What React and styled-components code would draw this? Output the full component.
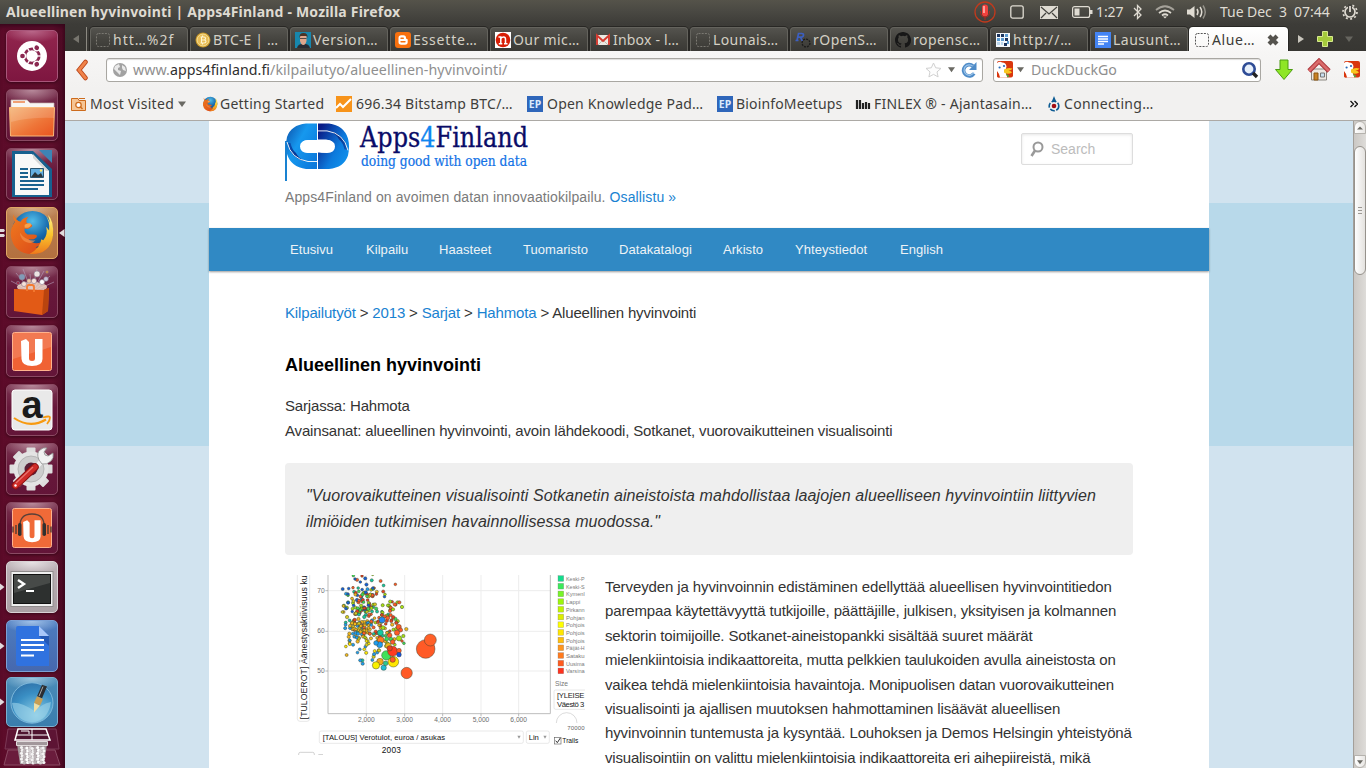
import React from "react";
import styled, { createGlobalStyle, css } from "styled-components";

const ui = `"Noto Sans", "Open Sans", sans-serif`;
const web = `"Liberation Sans", Arial, sans-serif`;

const Global = createGlobalStyle`
  * { box-sizing: border-box; }
  html, body { margin: 0; padding: 0; overflow: hidden; }
  svg { display: block; flex: none; }
`;

const Desktop = styled.div`
  width: 1366px; height: 768px; overflow: hidden;
  display: flex; flex-direction: column;
  font-family: ${ui}; background: #3c3b37;
`;
const TopPanel = styled.header`
  height: 24px; flex: none; display: flex; align-items: center;
  justify-content: space-between; padding: 0 8px 0 6px;
  background: linear-gradient(#55534a, #4a4943 45%, #3d3c38);
  color: #dfdbd2;
`;
const WindowTitle = styled.div`
  font-size: 14px; font-weight: 700; white-space: pre; line-height: 24px; letter-spacing: 0.2px;
`;
const Indicators = styled.div`display: flex; align-items: center; height: 24px;`;
const Slot = styled.div`
  width: ${(p) => p.$w}px; display: flex; align-items: center; flex: none;
  font-size: 14px; line-height: 24px; white-space: pre; letter-spacing: ${(p) => p.$ls || 0}px;
`;
const Body = styled.div`display: flex; flex: 1; min-height: 0;`;

const Launcher = styled.nav`
  width: 65px; flex: none; padding: 6px 0 0 0; overflow: hidden;
  display: flex; flex-direction: column; gap: 7px;
  background: linear-gradient(90deg, #5c0b29, #5f0f2c 80%, #4e0a24 95%, #3e071d);
  box-shadow: inset 0 5px 5px -3px #33061a;
`;
const LaunchRow = styled.div`
  height: ${(p) => p.$h || 52}px; display: flex; align-items: center; flex: none;
  margin-top: ${(p) => p.$pull || 0}px;
`;
const Pip = styled.div`width: 6px; flex: none; display: flex; align-items: center;`;
const Tile = styled.div`
  width: 52px; height: 100%; flex: none; border-radius: 5px; border: 1px solid ${(p) => p.$edge || "#8a4a63"};
  background: ${(p) => p.$bg || "radial-gradient(ellipse 30px 14px at 50% 0, #b78a9b, transparent), linear-gradient(#7b3652, #67173a 45%, #631538)"};
  box-shadow: 0 1px 3px rgba(30, 0, 12, .6);
  svg { margin: -1px; }
`;
const TrashWrap = styled.div`padding-left: 3px;`;

const Browser = styled.main`flex: 1; min-width: 0; display: flex; flex-direction: column; background: #f2f1f0;`;
const TabBar = styled.div`
  height: 27px; flex: none; display: flex; align-items: flex-end; background: linear-gradient(#3d3c38, #373632);
`;
const TabScroll = styled.div`width: 22px; height: 24px; display: flex; align-items: center; padding-left: 7px; border-right: 1px solid #8b8981; margin-right: 3px;`;
const Tab = styled.div`
  width: 98px; height: 24px; margin-right: 2px; flex: none; display: flex; align-items: center; padding-left: 4px;
  gap: 2px; font-size: 14px; white-space: nowrap; color: #d4d0c5;
  border: 1px solid #64635d; border-bottom: 0; border-radius: 4px 4px 0 0;
  background: linear-gradient(#54534e, #45443f 50%, #3a3935);
  box-shadow: 0 0 0 1px #282724;
  ${(p) => p.$active && css`
    margin-left: -1px; width: 99px; margin-right: 0; color: #3c3b37; border-color: #fff; background: linear-gradient(#fff, #f7f6f5);
  `}
  span { letter-spacing: ${(p) => p.$ls ?? 0.6}px; line-height: 20px; flex: 1; }
`;
const TabTools = styled.div`display: flex; align-items: center; height: 24px; gap: 12px; padding-left: 9px;`;

const NavBar = styled.div`
  height: 37px; flex: none; display: flex; align-items: center; padding-left: 10px; background: linear-gradient(#f7f6f5, #f2f1f0);
`;
const Field = styled.div`
  height: 24px; width: ${(p) => p.$w}px; margin-left: ${(p) => p.$ml}px; flex: none;
  border: 1px solid #a9a7a2; border-radius: 3px; background: #fff; box-shadow: inset 0 1px 1px #dedddb;
  display: flex; align-items: center; padding: 0 ${(p) => p.$pr}px 0 ${(p) => p.$pl}px; gap: ${(p) => p.$gap}px;
  font-size: 14.2px; color: #8f8f8f; white-space: nowrap;
  span { flex: 1; line-height: 22px; letter-spacing: ${(p) => p.$ls || 0}px; padding-left: ${(p) => p.$indent || 0}px; }
  b { font-weight: 400; color: #2e2e2e; }
`;
const NavIcons = styled.div`display: flex; align-items: center; gap: 13px; margin-left: 13px;`;

const Bookmarks = styled.div`
  height: 33px; flex: none; display: flex; align-items: center; padding: 0 0 1px 6px; border-bottom: 1px solid #aca9a5;
  font-size: 14px; color: #3f3e3b; white-space: nowrap;
`;
const Bookmark = styled.div`
  width: ${(p) => p.$w}px; flex: none; display: flex; align-items: center; gap: ${(p) => p.$gap}px;
  letter-spacing: ${(p) => p.$ls ?? 0.24}px;
  svg + span { line-height: 20px; }
`;

const Viewport = styled.div`flex: 1; min-height: 0; display: flex;`;
const Canvas = styled.div`
  flex: 1; min-width: 0; overflow: hidden; display: flex; justify-content: center;
  background: linear-gradient(#d1e3ef 0 82px, #b8d9ea 82px 325px, #d1e3ef 325px);
`;
const Page = styled.div`width: 1000px; background: #fff; font-family: ${web}; color: #333; font-size: 15px;`;
const SiteHeader = styled.div`height: 107px; padding: 2px 76px 0; display: flex; justify-content: space-between;`;
const Tagline = styled.p`margin: 6px 0 0; font-size: 14px; line-height: 20px; color: #7a7a7a; white-space: nowrap; letter-spacing: 0.11px;`;
const Link = styled.a`color: #1982d1;`;
const SearchBox = styled.div`
  width: 112px; height: 32px; margin-top: 10px; border: 1px solid #ddd; border-radius: 2px; box-shadow: inset 0 1px 3px rgba(0,0,0,.1);
  display: flex; align-items: center; gap: 7px; padding-left: 8px; font-size: 14px; color: #bcbcbc;
`;
const Menu = styled.div`
  height: 43px; background: #3089c4; box-shadow: 0 1px 2px rgba(0,0,0,.4); padding-left: 65px; display: flex; align-items: center;
  font-size: 13px; color: #eef3f6;
  position: relative;
`;
const MenuItem = styled.span`padding: 0 16px; width: ${(p) => p.$w}px; flex: none; white-space: nowrap; letter-spacing: 0.05px;`;
const Article = styled.article`padding: 30px 76px 0;`;
const Crumbs = styled.div`line-height: 24px; white-space: nowrap; letter-spacing: -0.155px;`;
const Heading = styled.h1`margin: 28px 0 0; font-size: 18px; line-height: 24px; color: #000; white-space: nowrap;`;
const Meta = styled.p`margin: 16px 0 0; line-height: 25px; white-space: nowrap; letter-spacing: -0.168px;`;
const Quote = styled.blockquote`
  margin: 20px 0 0; height: 92px; padding: 20px 21px; border-radius: 4px; background: #efefef;
  font-size: 16px; font-style: italic; line-height: 26px; white-space: nowrap; letter-spacing: 0.085px;
`;
const Columns = styled.div`display: flex; gap: 20px; margin-top: 20px;`;
const Copy = styled.p`margin: 0; line-height: 24.4px; white-space: nowrap;`;
const CopyLine = styled.span`display: block; letter-spacing: ${(p) => p.$ls}px;`;

const Scrollbar = styled.div`
  width: 13px; flex: none; background: linear-gradient(90deg, #cbc8c4, #dedcd9); border-left: 1px solid #a39f9a;
  display: flex; flex-direction: column;
`;
const ScrollButton = styled.div`
  height: 13px; border-radius: 7px 7px 0 0; background: linear-gradient(90deg, #fff, #e8e6e3); border: 1px solid #b5b2ad;
  display: flex; align-items: center; justify-content: center;
  ${(p) => p.$down && css`margin-top: auto; border-radius: 0 0 7px 7px;`}
`;
const Thumb = styled.div`
  height: 129px; margin-top: 12px; border: 1px solid #96928c; border-radius: 6px;
  background: linear-gradient(90deg, #fefefe, #e4e2df); display: flex; align-items: center; justify-content: center;
`;

/* ---------- small icons ---------- */
const Blank = ({ c = "#7b7972" }) => (
  <svg width="16" height="16"><rect x="1.5" y="1.5" width="13" height="13" rx="2" fill="none" stroke={c} strokeDasharray="2 1.2" /></svg>
);
const Bitcoin = () => (
  <svg width="16" height="16"><circle cx="8" cy="8" r="7.5" fill="#c79524" /><circle cx="8" cy="8" r="6" fill="#e9bd55" stroke="#f8e29a" />
    <path d="M6.500 5v6M5.500 5H9q1.500 0 1.500 1.500T9 8H6.500M9 8q2 0 2 1.500T9 11H5.500M7.500 3.500V5M7.500 11v1.500" stroke="#fff6d2" strokeWidth="1.100" fill="none" /></svg>
);
const Portrait = () => (
  <svg width="16" height="16"><path fill="#1787ad" d="M0 0h16v16H0z" /><path fill="#2a2b32" d="M2 16q1-4 5-4h3q4 0 5 4z" /><path fill="#dfa68c" d="M5 4h6.500v5q-1 4-3.200 4T5 9z" /><path fill="#4a3326" d="M4.500 6q-.5-5 4-5t4 5l-1-2H5.500z" /><path stroke="#333" strokeWidth=".8" d="M5 6.500h6.500" /></svg>
);
const Blogger = () => (
  <svg width="16" height="16"><rect width="16" height="16" rx="3" fill="#f8700e" /><path fill="#fff" d="M3.500 6q0-2.700 2.700-2.700H8.500Q11 3.300 11 6q0 1 1 1 .700 0 .700.800V10q0 2.700-2.700 2.700H6.200Q3.500 12.700 3.500 10z" /><path d="M6 6.200h2.300M6 9.800h4" stroke="#f8700e" strokeWidth="1.400" strokeLinecap="round" /></svg>
);
const RedN = () => (
  <svg width="16" height="16"><path fill="#fff" d="M0 0h16v16H0z" /><circle cx="8" cy="8" r="7.300" fill="#d81e05" /><path d="M3.500 5h2.300v6.500M3.800 11.700h3.500M5.800 6.500q1.200-1.500 2.800-1.500 1.900 0 1.900 2.200v4.500M9 11.700h3.500" fill="none" stroke="#fff" strokeWidth="1.500" /></svg>
);
const Gmail = () => (
  <svg width="16" height="16"><path fill="#ece9e2" d="M1 3h14v10H1z" /><path d="m3 13 5-5 5 5" stroke="#bdb9ae" fill="none" /><path d="M2 13V3.500L8 9l6-5.500V13" fill="none" stroke="#d5392e" strokeWidth="1.900" /></svg>
);
const RLogo = () => (
  <svg width="16" height="16"><path d="m2 8.500 1.500-7h3.200q2 0 1.800 1.600-.3 2-2.300 2H3.500M5.500 5.200 7.300 9M.5 8.500h3" stroke="#3c5fc0" strokeWidth="1.700" fill="none" /><circle cx="11" cy="11" r="3.900" fill="none" stroke="#1c1c1c" strokeWidth="1.300" strokeDasharray="2 1" /></svg>
);
const Octo = () => (
  <svg width="16" height="16" viewBox="0 0 16 16"><path fill="#171717" d="M8 0C3.580 0 0 3.580 0 8c0 3.540 2.290 6.530 5.470 7.590.4.070.55-.17.55-.38v-1.490c-2.010.37-2.530-.49-2.690-.94-.09-.23-.48-.94-.82-1.130-.28-.15-.68-.52-.01-.53.63-.01 1.080.58 1.230.82.72 1.210 1.870.87 2.330.66.07-.52.28-.87.51-1.070-1.780-.2-3.640-.89-3.640-3.950 0-.87.31-1.590.82-2.150-.08-.2-.36-1.020.08-2.120 0 0 .67-.21 2.200.82a7.600 7.600 0 0 1 4 0c1.530-1.040 2.200-.82 2.200-.82.44 1.100.16 1.920.08 2.120.51.56.82 1.270.82 2.150 0 3.070-1.870 3.750-3.650 3.950.29.25.54.73.54 1.480v2.200c0 .21.15.46.55.38A8 8 0 0 0 16 8c0-4.420-3.580-8-8-8z" /></svg>
);
const Checks = () => (
  <svg width="16" height="16"><path fill="#f4f8fb" d="M1 1h14v14H1z" /><path fill="#1c355e" d="M2 2h3v3H2zM6 2h3v3H6zM10 6h3v3h-3zM9 11h3v3H9z" /><path fill="#5b9bd0" d="M10 2h3v3h-3zM2 6h3v3H2zM6 6h3v3H6zM12 9h2v3h-2z" /><path fill="#bcd7ec" d="M2 10h3v3H2zM6 10h2v3H6z" /></svg>
);
const Docs = () => (
  <svg width="16" height="16"><path fill="#4384f4" d="M0 0h16v16H0z" /><path d="M3 4.500h10M3 7h10M3 9.500h10M3 12h6" stroke="#fff" strokeWidth="1.300" /></svg>
);
const Tri = ({ dir = "down", c = "#6a6963", s = 8 }) => (
  <svg width={s} height={s} viewBox="0 0 8 8"><path fill={c} d={{ down: "M0 1.500h8L4 7z", left: "M7 0v8L1 4z", right: "M1 0v8l6-4z", up: "M0 6h8L4 2z" }[dir]} /></svg>
);
const EP = () => (
  <svg width="16" height="16"><path fill="#2f66ba" d="M0 0h16v16H0z" /><text x="8" y="12" textAnchor="middle" fontFamily="Noto Sans" fontWeight="700" fontSize="10.500" letterSpacing="0" fill="#dce9fb">EP</text></svg>
);
const Duck = () => (
  <svg width="16" height="17" viewBox="0 0 16 17"><rect width="16" height="16.500" rx="2" fill="#d9360d" /><path fill="#fff" d="M0 2Q3 0 5 1.500q4 0 4.500 4L8.500 9q0 4 2 7.500H3Q2 12 0 10z" /><path fill="#d9360d" d="M0 11q2 2 2.500 5.500H1Q0 16 0 15z" /><path fill="#f8c61e" d="M7 8.500q4-2.500 8.500-1-1 2-4 2.300 3 .3 3.500 1.700-4 2.500-8 0z" /><circle cx="2.600" cy="6.500" r="1.100" fill="#2769b8" /><circle cx="7" cy="5" r="1.100" fill="#2769b8" /><path fill="#4cad3e" d="m9 12.500 3.500 2.500-2 1.500z" /></svg>
);

const Fox = ({ s }) => (
  <svg width={s} height={s} viewBox="0 0 48 48">
    <defs>
      <radialGradient id="sea" cx=".5" cy=".25" r=".8"><stop offset="0" stopColor="#51bce9" /><stop offset=".5" stopColor="#1769ac" /><stop offset="1" stopColor="#07305f" /></radialGradient>
      <linearGradient id="fur" x1="0" y1="0" x2="1" y2="1"><stop offset="0" stopColor="#ef7c20" /><stop offset=".5" stopColor="#e5601b" /><stop offset="1" stopColor="#d5411b" /></linearGradient>
      <linearGradient id="tail" x1="0" y1="0" x2="0" y2="1"><stop offset="0" stopColor="#fff38d" /><stop offset=".5" stopColor="#fac42d" /><stop offset="1" stopColor="#ed7a1c" /></linearGradient>
    </defs>
    <circle cx="25" cy="23" r="21" fill="url(#sea)" />
    <path fill="url(#fur)" d="M5 5q0 5 2 8Q2 20 3 28q3 17 21 18 15 0 20-12-8 8-16 5 5-1 6-5-8 3-13-3 5 1 8-2 2-3-3-3l-6 0q-4-2-3-6 4 1 6-1 3-2 1-3l-5-2q-1-3 2-6-6 1-8 5-5-1-8-8z" />
    <path fill="url(#tail)" d="M38 6q5 6 4 16l-3-4q2 8-3 14l-2-1q-1 9-12 15 21 1 24-19Q47 12 41 6l2 8q-2-5-5-8z" />
    <path fill="#f8a24b" d="M17 16q6-3 7 0-2 4-7 3z" /><path fill="#f4924a" d="M12 24q6 9 16 8-3 4-9 2t-7-10z" opacity=".7" />
  </svg>
);

/* ---------- launcher artwork, 52 × 52 ---------- */
const Art = ({ children, h = 52 }) => <svg width="52" height={h} viewBox="0 0 52 52" preserveAspectRatio="none">{children}</svg>;
const DashIcon = () => (
  <Art><circle cx="26" cy="26" r="15" fill="#fff" /><circle cx="26" cy="26" r="7.200" fill="none" stroke="#8a2750" strokeWidth="2.800" />
    {[180, 60, -60].map((a) => <g key={a} transform={`rotate(${a} 26 26)`}><circle cx="35.500" cy="26" r="3" fill="#8a2750" stroke="#fff" strokeWidth="1.300" /></g>)}
    {[0, 120, 240].map((a) => <path key={a} transform={`rotate(${a} 26 26)`} d="M31 26h5" stroke="#fff" strokeWidth="1.300" />)}</Art>
);
const FolderIcon = () => (
  <Art><defs><linearGradient id="fo" x1="0" y1="0" x2="1" y2="1"><stop offset="0" stopColor="#f4b272" /><stop offset=".6" stopColor="#ee7437" /><stop offset="1" stopColor="#e9541f" /></linearGradient></defs>
    <path fill="#f8f6f4" stroke="#c9b6b0" strokeWidth=".7" d="M5 19v-8h16l3 3h24v5z" /><path d="M7 13h12" stroke="#f0a074" strokeWidth="2" /><path fill="url(#fo)" stroke="#f9ba7b" d="M3.500 18.500h45L47.500 47h-43z" /><path d="M5 33q20-5 43-4V19H4z" fill="#fff" opacity=".15" /></Art>
);
const WriterIcon = () => (
  <Art><path fill="#17608f" d="M6 3h21l19 18v28H6z" /><path fill="#3d84b4" d="M33 2h13v13z" /><path fill="#f8f8f8" d="M9 6h17l17 17v24H9z" /><path fill="#d6d6d6" d="M27 6v4l13 13h3z" /><path d="M14 21h8M14 25h8M14 29h8M14 33h24M14 37h24M14 41h18" stroke="#1a628f" strokeWidth="1.900" /><path fill="#63aee0" stroke="#28536f" d="M24.500 20.500h13v9h-13z" /><path fill="#28353b" d="m25 29 4-5 3 3 3-2 2 4z" /><circle cx="35" cy="22.500" r="1.200" fill="#ffe569" /></Art>
);
const BagIcon = () => (
  <Art><g stroke="#b79fbc" strokeWidth=".6">{[[5, 15], [10, 7], [17, 3], [24, 8], [31, 3], [38, 5], [44, 10], [48, 16]].map(([x, y]) => <path key={x} d={`M26 26 ${x} ${y}`} />)}</g>
    <ellipse cx="26" cy="21" rx="15" ry="5" fill="#f7e2cf" opacity=".8" />
    {[[16, 11, 3, "#819bb7"], [31, 8, 3, "#ece4e2"], [40, 13, 2.300, "#c9c2d8"], [23, 15, 2.200, "#f1c8a4"], [36, 16, 2.500, "#fff"], [28, 15, 2.600, "#f8e3d9"], [18, 18, 2.500, "#f6e1d7"], [41, 6, 1.300, "#e0902e"], [12, 17, 1.700, "#9a2d4e"]].map(([x, y, r, c]) => <circle key={x} cx={x} cy={y} r={r} fill={c} stroke="#8b7c90" strokeWidth=".6" />)}
    <path fill="#e25a16" d="m8 23 30 1 5-2-1 23-6 4-28-4z" /><path fill="#b9440f" d="m38 24 5-2-1 23-6 4z" /><path fill="none" stroke="#f47b31" strokeWidth="1.800" d="M21 25v-4q0-2 2-2h3q2 0 2 2v5" /></Art>
);
const U = () => <path fill="#fff" d="M15 16 20 14l3 3v16.500q0 2.500 3 2.500t3-2.500V14h7.500v20q0 7-10.500 7-10 0-10.500-7z" />;
const OneIcon = () => <Art><rect x="6.500" y="7.500" width="39" height="38" rx="2" fill="#f06234" stroke="#ffb28d" /><path fill="#fff" opacity=".15" d="M7 8h38v14L7 34z" /><U /></Art>;
const AmazonIcon = () => (
  <Art><rect x="6" y="6" width="40" height="40" rx="3" fill="#e9e9e9" stroke="#fff" /><text x="26" y="33.500" fontFamily="Liberation Sans, Arial" fontWeight="700" fontSize="38" textAnchor="middle" fill="#1b1b1b">a</text><path d="M8 34q16 11 32 1.500" stroke="#f79a12" strokeWidth="2.100" fill="none" /><path d="M37 33.500q7-2 7 0 0 3-3 6.500" stroke="#f79a12" strokeWidth="1.800" fill="none" /></Art>
);
const GearIcon = () => (
  <Art>{[0, 45, 90, 135].map((a) => <rect key={a} transform={`rotate(${a} 25 26)`} x="20.500" y="4.500" width="9" height="43" rx="1" fill="#dedede" />)}<circle cx="25" cy="26" r="17.500" fill="#e4e4e4" /><circle cx="25" cy="26" r="13" fill="#cdcdcd" stroke="#b6b6b6" /><circle cx="25" cy="26" r="6.500" fill="#571e35" />
    <path d="M29 25 37 17" stroke="#f1f1f1" strokeWidth="5" /><path d="M33 17q-3-7 1-10 3-3 7-2l-3 4 1 3 3 1 5-3q1 5-2 8-4 4-9 3z" fill="#f1f1f1" stroke="#8d8d8d" strokeWidth=".8" /><path d="M9.500 42.500 29 24" stroke="#8c1111" strokeWidth="7.500" strokeLinecap="round" /><path d="M9.500 42.500 29 24" stroke="#cf2c28" strokeWidth="5.500" strokeLinecap="round" /><path d="M10 40 27 24" stroke="#e97570" strokeWidth="1.200" /><circle cx="9.500" cy="42.500" r="1.200" fill="#fff" /></Art>
);
const MusicIcon = () => <Art><rect x="6.500" y="6.500" width="39" height="39" rx="2" fill="#f06a38" stroke="#ffb28d" /><path d="M14 26q-1-14 12-14t12 14" fill="none" stroke="#5a4038" strokeWidth="1.300" /><g fill="#303030"><rect x="12" y="21" width="3.500" height="13" rx="1.700" /><rect x="36.500" y="21" width="3.500" height="13" rx="1.700" /></g><path d="M10 23v9M7 24.500v6M42 23v9M45 24.500v6" stroke="#413632" strokeWidth="1.300" /><g transform="translate(5 7) scale(.81)"><U /></g></Art>;
const TermIcon = () => <Art><rect x="5" y="10.500" width="42" height="35" fill="#efefef" stroke="#8f8b8c" /><rect x="7.500" y="13.500" width="37" height="29" fill="#2d302f" stroke="#111" /><path fill="#595c5a" opacity=".6" d="M8 14h36v8L8 32z" /><path d="m12 19 6 4-6 4" stroke="#fff" strokeWidth="2.400" fill="none" /><path d="M20 30h8" stroke="#fff" strokeWidth="2" /></Art>;
const DocIcon = () => <Art><path fill="#3072df" d="M12 6h21l10 10v30H12q-2 0-2-2V8q0-2 2-2z" /><path fill="#a9c7f9" d="m33 6 10 10H33z" /><path fill="#2458b5" d="M33 16h10v10z" /><path d="M15 20h23M15 25h23M15 30h23M15 35.500h13" stroke="#fff" strokeWidth="2.200" /></Art>;
const QuillIcon = () => (
  <Art h={50}><defs><radialGradient id="qb" cx=".6" cy=".8" r=".9"><stop offset="0" stopColor="#8fd0e6" /><stop offset=".6" stopColor="#3a8fc4" /><stop offset="1" stopColor="#2c6da5" /></radialGradient></defs>
    <circle cx="26" cy="27" r="21" fill="url(#qb)" stroke="#7db8da" /><path fill="#9ed3ea" opacity=".6" d="M6 27q10-1 23 9 6-8 16-10-3 20-19 21Q9 46 6 27z" /><path fill="#2b2e31" d="m36 8 5 2-5 12-5-2z" /><path fill="#c99f53" d="m31 20 6 3-3 7-6-3z" /><path fill="#f0dfa6" d="m28 27 6 3-6 7z" /><path stroke="#fff" opacity=".6" d="m37 10-4 10" /></Art>
);
const paper = Array.from({ length: 54 }, (_, i) => [18.5 + (i % 9) * 2.7 + (i % 2) * 0.8, 19.5 + Math.floor(i / 9) * 2.9 + ((i * 5) % 3) * 0.5, ["#f4f3f3", "#d8d3d5", "#fff", "#bdb5b8"][(i * 7 + Math.floor(i / 9)) % 4]]);
const TrashIcon = () => (
  <svg width="58" height="40" viewBox="0 0 58 40"><path fill="#5d1434" stroke="#7b3855" d="M5 1h48l3 20H2z" /><path d="M15 1h28l4 11H12z" fill="#4f1430" stroke="#fff" strokeWidth="1.500" /><path d="M29 1v11M13 7h33M18 3h8v3" stroke="#fff" fill="none" />
    <path fill="#6a1c3c" stroke="#8a4a63" d="m5 22-4 15h56l-5-15z" /><path d="m14 16 3 20h24l3-20z" fill="#a2969a" />{paper.map(([x, y, c], i) => <circle key={i} cx={x} cy={y} r="1.600" fill={c} />)}<path d="M13.500 13.500h31v4h-31z" fill="#a2979b" stroke="#e1dcdd" /></svg>
);

/* ---------- scatter chart ---------- */
const palette = ["#ff5a26", "#f2b61c", "#ffe600", "#a8e112", "#3edc55", "#18c8a0", "#1e9df0", "#155ed8", "#e8401f", "#d5cb1e"];
const rand = ((s) => () => (s = (s * 16807) % 2147483647) / 2147483647)(4711);
const cloud = (n, x, y, sx, sy, colors) =>
  Array.from({ length: n }, () => {
    const g = () => rand() + rand() + rand() - 1.5;
    return [x + g() * sx, y + g() * sy, 4 + rand() * 1.2, palette[colors[Math.floor(rand() * colors.length)]]];
  });
const dots = [
  ...cloud(24, 250, 88, 46, 38, [7, 6, 0, 3, 8, 5, 7]),
  ...cloud(100, 256, 142, 62, 52, [0, 3, 7, 4, 5, 8, 1, 9]),
  ...cloud(80, 240, 205, 46, 34, [1, 1, 1, 9, 6, 0]),
  ...cloud(42, 308, 210, 56, 46, [0, 3, 5, 4, 8, 1]),
  ...cloud(26, 262, 262, 60, 34, [1, 6, 2, 9]),
  ...cloud(18, 328, 150, 26, 46, [0, 8, 3]),
  [220, 47, 4, palette[4]], [246, 48, 4, palette[8]], [278, 43, 4, palette[3]], [225, 57, 4, palette[7]],
  [241, 66, 4, palette[7]], [346, 73, 4, palette[0]], [219, 83, 4, palette[0]], [187, 156, 4, palette[9]],
  [204, 102, 4, palette[7]], [315, 103, 4, palette[3]], [358, 127, 5, palette[0]], [366, 141, 5, palette[3]],
  [248, 311, 5, palette[6]], [247, 301, 5, palette[5]], [241, 301, 5, palette[6]],
  [356, 201, 8, palette[0]], [351, 218, 8, palette[0]], [362, 210, 6, palette[0]], [357, 235, 8, palette[3]], [370, 228, 5, palette[3]], [366, 243, 4, palette[0]],
  [306, 180, 9, "#2388f4"], [323, 174, 6, palette[0]], [301, 218, 9, palette[5]], [302, 240, 10, "#ff7a20"], [299, 254, 9, palette[6]], [288, 249, 7, palette[6]],
  [329, 226, 7, palette[0]], [320, 237, 6, palette[4]], [333, 238, 6, palette[4]], [338, 246, 7, palette[0]], [325, 257, 9, "#f2b61c"], [309, 203, 6, palette[3]],
  [300, 305, 10, "#f5a81c"], [288, 316, 11, "#faf000"], [340, 305, 16, "#ffe600"], [319, 286, 14, "#3ee05a"], [338, 274, 15, "#ff3a20"],
  [338, 299, 8, "#ff5a26"], [311, 323, 8, "#22bcd6"], [317, 310, 7, "#2dc890"], [357, 272, 7, palette[0]], [357, 284, 7, "#1450e0"], [329, 265, 8, "#e8401f"],
  [437, 267, 28, "#ff5a26"], [451, 240, 18, "#ff6028"], [380, 339, 17, "#ff5a26"],
];
const regions = [
  ["Keski-P", "#14dc8c"], ["Keski-S", "#3bea5a"], ["Kymenl", "#78f528"], ["Lappi", "#9cf70a"], ["Pirkann", "#c0f500"],
  ["Pohjan", "#dcee00"], ["Pohjois", "#ffff00"], ["Pohjois", "#ffe600"], ["Pohjois", "#ffbe0a"], ["Päijät-H", "#ff961e"],
  ["Sataku", "#ff7a1e"], ["Uusima", "#ff5a1e"], ["Varsina", "#ff321e"],
];
const Chart = () => (
  <svg width="300" height="180" viewBox="15 45 900 540" fontFamily="Liberation Sans, Arial, sans-serif">
    <rect x="52" y="20" width="37" height="464" rx="8" fill="#fff" stroke="#dcdcdc" strokeWidth="2" />
    <text transform="translate(80 478) rotate(-90)" fontSize="26" fill="#222" textLength="432">[TULOEROT] Äänestysaktiivisuus ku</text>
    <path d="M144 92h667M144 214h667M144 333h667M259 45v416M374 45v416M488 45v416M603 45v416M716 45v416" stroke="#ededed" strokeWidth="3" />
    <path d="M144 45v416h667V45" fill="none" stroke="#bdbdbd" strokeWidth="3" />
    <path d="M136 92h8M136 214h8M136 333h8M259 461v8M374 461v8M488 461v8M603 461v8M716 461v8" stroke="#999" strokeWidth="2" />
    <g fontSize="20" fill="#6e6e6e">
      {[["70", 98], ["60", 220], ["50", 340]].map(([t, y]) => <text key={t} x="134" y={y} textAnchor="end">{t}</text>)}
      {[259, 374, 488, 603, 716].map((x, i) => <text key={x} x={x} y="486" textAnchor="middle">{`${i + 2},000`}</text>)}
    </g>
    {dots.map(([x, y, r, c], i) => <circle key={i} cx={x} cy={y} r={r} fill={c} stroke="#37402f" strokeOpacity=".75" strokeWidth="1.800" />)}
    {regions.map(([t, c], i) => (
      <g key={i}><rect x="834" y={47 + i * 23.1} width="17" height="17" fill={c} stroke="#777" strokeOpacity=".6" strokeWidth="1.500" /><text x="858" y={63 + i * 23.1} fontSize="18" textLength={t === "Lappi" ? 43 : 56} lengthAdjust="spacingAndGlyphs" fill="#7c7c7c">{t}</text></g>
    ))}
    <text x="825" y="378" fontSize="20" fill="#777">Size</text>
    <rect x="822" y="390" width="120" height="58" rx="5" fill="#fff" stroke="#dcdcdc" strokeWidth="2" />
    <g fontSize="23" fill="#222"><text x="831" y="414" textLength="82">[YLEISE</text><text x="831" y="440" textLength="82">Väestö 3</text></g>
    <path d="M829 489a31 31 0 0 1 62 0" fill="none" stroke="#c9c9c9" strokeWidth="2" /><text x="862" y="509" fontSize="18" fill="#666" textLength="52">70000</text>
    <rect x="118" y="513" width="612" height="37" rx="5" fill="#fff" stroke="#dedede" strokeWidth="2" /><rect x="739" y="513" width="69" height="37" rx="5" fill="#fff" stroke="#dedede" strokeWidth="2" />
    <g fontSize="23" fill="#111"><text x="128" y="539" textLength="367">[TALOUS] Verotulot, euroa / asukas</text><text x="746" y="540">Lin</text><text x="305" y="580" fontSize="25" textLength="58">2003</text><text x="847" y="549" fontSize="20" textLength="48">Trails</text></g>
    <path fill="#999" d="M712 527h10l-5 9zM790 527h10l-5 9z" /><rect x="823" y="532" width="20" height="20" fill="#fff" stroke="#666" strokeWidth="2" /><path d="m827 542 5 6 9-14" fill="none" stroke="#333" strokeWidth="3" />
    <rect x="56" y="577" width="47" height="30" rx="5" fill="none" stroke="#bbb" strokeWidth="2" /><path d="M115 584h14" stroke="#ccc" strokeWidth="3" />
  </svg>
);

/* One half of the mark; the other half is the same shape turned by 180 degrees. */
const LogoHalf = ({ body, shade }) => (
  <>
    <path d="M32 .5H21Q6 2 2 14q-2 9 0 17 4 13 19 15h11V30H24q-8-1-8-7T24 17h8z" fill={`url(#${body})`} />
    <path d="M2.500 20q2 14 18 18.500Q13 35 11 30 7 27 5.500 20z" fill={`url(#${shade})`} />
    <path d="M2 19q4 17 21 19.500H32" fill="none" stroke="#fff" strokeWidth=".9" />
  </>
);
const Logo = () => (
  <svg width="250" height="58" viewBox="0 0 250 58">
    <defs>
      <linearGradient id="la" x1="0" y1="0" x2="1" y2=".8"><stop offset="0" stopColor="#0d4fa8" /><stop offset=".45" stopColor="#1698ee" /><stop offset="1" stopColor="#0b79dc" /></linearGradient>
      <linearGradient id="lb" x1="0" y1="0" x2="1" y2=".8"><stop offset="0" stopColor="#129af2" /><stop offset=".45" stopColor="#0c7adc" /><stop offset="1" stopColor="#0a1c86" /></linearGradient>
      <linearGradient id="lc" x1="0" y1="0" x2="1" y2="1"><stop offset="0" stopColor="#0b57b8" /><stop offset="1" stopColor="#08186f" /></linearGradient>
    </defs>
    <path d="M1 18v40" stroke="#1982d1" strokeWidth="2" />
    <LogoHalf body="la" shade="lc" />
    <g transform="rotate(180 32.500 23.200)"><LogoHalf body="lb" shade="lc" /></g>
    <path d="M15 23.500q0-6 8-6.500 6 0 9.500 2 3.500-2 9.500-2 8 .5 8 6.500t-8 6.500q-6 0-9.500-1.500-3.500 1.500-9.500 1.500-8-.5-8-6.500z" fill="#fff" />
    <path d="M32.500 0v18M32.500 29v18" stroke="#fff" strokeWidth=".9" />
    <g fontFamily="DejaVu Serif Condensed, DejaVu Serif, serif"><text x="75" y="24" fontSize="27" fill="#0a0c68" stroke="#0a0c68" strokeWidth=".3" textLength="168" lengthAdjust="spacingAndGlyphs">Apps<tspan fill="#0f86f0" stroke="#0f86f0">4</tspan>Finland</text>
      <text x="76" y="42.500" fontSize="14.500" fill="#1272e6" stroke="#1272e6" strokeWidth=".2" textLength="166" lengthAdjust="spacingAndGlyphs">doing good with open data</text></g>
  </svg>
);

const tabs = [
  ["htt…%2f", <Blank />, 1], ["BTC-E | …", <Bitcoin />, 0.15], ["Version…", <Portrait />], ["Essette…", <Blogger />, 0.8], ["Our mic…", <RedN />, 0.4], ["Inbox - l…", <Gmail />, 0.2],
  ["Lounais…", <Blank />, 0.4], ["rOpenS…", <RLogo />, 0.5], ["ropensc…", <Octo />, 0.5], ["http://…", <Checks />, 0.8], ["Lausunt…", <Docs />, 0.5],
];
const tileGloss = (a, b, c) => `radial-gradient(ellipse 30px 12px at 50% 0, ${a}, transparent), linear-gradient(${b}, ${c})`;
const apps = [
  { icon: <DashIcon />, bg: tileGloss("#b9688a", "#92264e", "#7e1640"), edge: "#a8567a" },
  { icon: <FolderIcon /> }, { icon: <WriterIcon /> },
  { icon: <Art><g transform="translate(2 2)"><Fox s={47} /></g></Art>, bg: tileGloss("#d9b089", "#bb8154", "#b3703f"), edge: "#e0a765", pips: 2, focus: true },
  { icon: <BagIcon /> }, { icon: <OneIcon /> }, { icon: <AmazonIcon /> }, { icon: <GearIcon /> }, { icon: <MusicIcon /> },
  { icon: <TermIcon />, bg: tileGloss("#e8e3e5", "#bbb0b5", "#aaa0a4"), edge: "#d9d2d5", pips: 1 },
  { icon: <DocIcon />, bg: tileGloss("#a3c3ea", "#4d7dc0", "#4668ae"), edge: "#7ca0d5", pips: 1 },
  { icon: <QuillIcon />, bg: tileGloss("#9ec7df", "#4a8cb8", "#3a7dad"), edge: "#7bb0d0", pips: 1, h: 50, pull: -2 },
];
const menu = [["Etusivu", 76], ["Kilpailu", 73], ["Haasteet", 84], ["Tuomaristo", 96], ["Datakatalogi", 104], ["Arkisto", 72], ["Yhteystiedot", 105], ["English", 76]];
const copy = [
  ["Terveyden ja hyvinvoinnin edistäminen edellyttää alueellisen hyvinvointitiedon", -0.11],
  ["parempaa käytettävyyttä tutkijoille, päättäjille, julkisen, yksityisen ja kolmannen", -0.13],
  ["sektorin toimijoille. Sotkanet-aineistopankki sisältää suuret määrät", -0.15],
  ["mielenkiintoisia indikaattoreita, mutta pelkkien taulukoiden avulla aineistosta on", -0.18],
  ["vaikea tehdä mielenkiintoisia havaintoja. Monipuolisen datan vuorovaikutteinen", -0.19],
  ["visualisointi ja ajallisen muutoksen hahmottaminen lisäävät alueellisen", -0.155],
  ["hyvinvoinnin tuntemusta ja kysyntää. Louhoksen ja Demos Helsingin yhteistyönä", -0.11],
  ["visualisointiin on valittu mielenkiintoisia indikaattoreita eri aihepiireistä, mikä", -0.19],
];

const Panel = () => (
  <TopPanel>
    <WindowTitle>Alueellinen hyvinvointi | Apps4Finland - Mozilla Firefox</WindowTitle>
    <Indicators>
      <Slot $w={36}><svg width="22" height="22"><circle cx="11" cy="11" r="10" fill="none" stroke="#c03a1d" strokeWidth="1.300" /><rect x="8" y="3.500" width="6" height="12" rx="3" fill="#f2413d" /><path d="M10 5v7" stroke="#ffc1b9" strokeWidth="1.500" /><path d="M6.500 10q0 6 4.500 6t4.500-6M11 16v3" stroke="#b3271d" fill="none" /></svg></Slot>
      <Slot $w={30}><svg width="14" height="14"><rect x=".8" y=".8" width="12.400" height="12.400" rx="2" fill="none" stroke="#dfdbd2" strokeWidth="1.300" /></svg></Slot>
      <Slot $w={32}><svg width="18" height="13"><path fill="#dfdbd2" d="M0 0h18v13H0z" /><path d="m1 1 8 7 8-7M1 12l5-5M17 12l-5-5" stroke="#45443f" fill="none" strokeWidth="1.200" /></svg></Slot>
      <Slot $w={24}><svg width="21" height="12"><rect x=".6" y=".6" width="17" height="10.800" rx="2" fill="none" stroke="#dfdbd2" strokeWidth="1.200" /><path fill="#dfdbd2" d="M2.500 2.500h5v7h-5zM18 4h2.500v4H18z" /></svg></Slot>
      <Slot $w={37} $ls={-0.1}>1:27</Slot>
      <Slot $w={22}><svg width="10" height="16"><path d="m1 4 7 7-3.500 3.500v-13L8 5l-7 7" fill="none" stroke="#dfdbd2" strokeWidth="1.300" /></svg></Slot>
      <Slot $w={32}><svg width="20" height="14" fill="none" stroke="#dfdbd2" strokeWidth="1.700"><path d="M1 5q9-7.500 18 0" opacity=".6" /><path d="M4 8q6-5 12 0M7 10.500q3-2.500 6 0" /><path d="m10 13.500-2-2h4z" fill="#dfdbd2" stroke="none" /></svg></Slot>
      <Slot $w={33}><svg width="20" height="16" fill="none" stroke="#dfdbd2" strokeWidth="1.500"><path d="M0 5.500h3L7.500 2v12L3 10.500H0z" fill="#dfdbd2" stroke="none" /><path d="M10 5q2 3 0 6M13 3q3.500 5 0 10" /><path d="M16 1.500q4.500 6.500 0 13" opacity=".5" /></svg></Slot>
      <Slot $w={122} $ls={-0.05}>{"Tue Dec  3  07:44"}</Slot>
      <Slot $w={16}><svg width="16" height="16" fill="none" stroke="#dfdbd2"><circle cx="8" cy="8" r="5" strokeWidth="1.700" /><circle cx="8" cy="8" r="7" strokeWidth="1.700" strokeDasharray="2 2.400" /><path d="M8 0v8" stroke="#45443f" strokeWidth="4" /><path d="M8 2v6" strokeWidth="1.800" /></svg></Slot>
    </Indicators>
  </TopPanel>
);

const Dock = () => (
  <Launcher>
    {apps.map((a, i) => (
      <LaunchRow key={i} $h={a.h} $pull={a.pull}>
        <Pip>{a.pips && <svg width="5" height="10"><path fill="#e2dadd" d={a.pips === 2 ? "M0 1h4l1 1.500L4 4H0zM0 6h4l1 1.500L4 9H0z" : "M0 1.500 4.500 5 0 8.500z"} /></svg>}</Pip>
        <Tile $bg={a.bg} $edge={a.edge}>{a.icon}</Tile>
        {a.focus && <Pip><svg width="7" height="8"><path fill="#e2dadd" d="M6.500 0v8L1 4z" /></svg></Pip>}
      </LaunchRow>
    ))}
    <LaunchRow $h={40} $pull={-6}><TrashWrap><TrashIcon /></TrashWrap></LaunchRow>
  </Launcher>
);

const Chrome = () => (
  <>
    <TabBar>
      <TabScroll><Tri dir="left" c="#77756e" /></TabScroll>
      {tabs.map(([t, icon, ls]) => <Tab key={t} $ls={ls}>{icon}<span>{t}</span></Tab>)}
      <Tab $active><Blank c="#555" /><span>Alue…</span><svg width="21" height="14"><path d="m3 3 8 8M11 3l-8 8" stroke="#55534e" strokeWidth="4.200" /></svg></Tab>
      <TabTools><Tri dir="right" c="#c9c6bd" s={8} /><svg width="16" height="16"><path d="M5.500.5h5v5h5v5h-5v5h-5v-5h-5v-5h5z" fill="#a5cb3c" stroke="#d7ea8d" /></svg><Tri c="#66655f" s={8} /></TabTools>
    </TabBar>
    <NavBar>
      <svg width="13" height="22"><path d="M10.500 3 4 11l6.500 8" fill="none" stroke="#b9451a" strokeWidth="4.500" strokeLinecap="round" /><path d="M10.500 3 4 11l6.500 8" fill="none" stroke="#f0834a" strokeWidth="2.800" strokeLinecap="round" /></svg>
      <Field $w={877} $ml={18} $pl={6} $pr={5} $gap={6} $ls={0.07}>
        <svg width="14" height="14"><circle cx="7" cy="7" r="7" fill="#a2a2a2" /><path fill="#e9e9e9" d="m2 3 4-2 1 3-2 1v2l3 1-1 4-3-3-3-3zM9 2l3 2 1 4-3-1-1-2z" /></svg>
        <span>www.<b>apps4finland.fi</b>/kilpailutyo/alueellinen-hyvinvointi/</span>
        <svg width="17" height="16"><path d="m8.500 1 2.200 4.800 5.300.6-4 3.500 1.100 5-4.600-2.500-4.600 2.500 1.100-5-4-3.500 5.300-.6z" fill="#fdfdfd" stroke="#d0d0d0" /></svg>
        <Tri s={7} /><svg width="16" height="16"><path d="M13 11.500A5.700 5.700 0 1 1 12 4" fill="none" stroke="#4f8cc8" strokeWidth="3.600" /><path d="M12.800 10.500A5.200 5.200 0 1 1 12 4.500" fill="none" stroke="#9cc4ea" strokeWidth="1.200" /><path fill="#4f8cc8" d="M15.500 0v8H8z" /></svg>
      </Field>
      <Field $w={268} $ml={10} $pl={3} $pr={1} $gap={4} $indent={3}>
        <Duck /><Tri s={7} /><span>DuckDuckGo</span>
        <svg width="18" height="18"><circle cx="8" cy="8" r="5.700" fill="#e7f0fb" stroke="#2e4c96" strokeWidth="2.600" /><path d="m12 12 4 4" stroke="#222" strokeWidth="3.400" /></svg>
      </Field>
      <NavIcons>
        <svg width="20" height="22"><path d="M6 1h8v9.500h4.500L10 20.500 1.500 10.500H6z" fill="#8ee626" stroke="#4d9d12" /></svg>
        <svg width="24" height="24"><path fill="#eee9e3" stroke="#8b8781" d="M4.500 11h15v11h-15z" /><path fill="#c98225" stroke="#8c5612" d="M7 15h4v7H7z" /><path fill="#c9dff0" stroke="#777" d="M13.500 15h4v4h-4z" /><path d="M2 13 12 3l10 10" fill="none" stroke="#a93339" strokeWidth="4.600" /><path d="M2 13 12 3l10 10" fill="none" stroke="#d96a6a" strokeWidth="2.800" /></svg>
        <Duck />
      </NavIcons>
    </NavBar>
    <Bookmarks>
      <Bookmark $w={131} $gap={4} $ls={0.3}><svg width="15" height="15"><path fill="#f6c594" stroke="#cd6b1c" d="M.5 2.500v12h14v-10H8l-1-2z" /><path stroke="#cd6b1c" d="M8 2.500h6" /><circle cx="7.500" cy="9" r="2.700" fill="#fff" stroke="#cd6b1c" strokeWidth="1.300" /><path d="m9.500 11 2 2" stroke="#cd6b1c" strokeWidth="1.500" /></svg><span>Most Visited</span><Tri /></Bookmark>
      <Bookmark $w={134} $gap={2}><Fox s={16} /><span>Getting Started</span></Bookmark>
      <Bookmark $w={191} $gap={4}><svg width="16" height="16"><path fill="#f7931a" d="M0 0h16v16H0z" /><path d="m0 12 4-4 3 3 8-8" stroke="#fff" strokeWidth="2" fill="none" /></svg><span>696.34 Bitstamp BTC/…</span></Bookmark>
      <Bookmark $w={190} $gap={4} $ls={0.2}><EP /><span>Open Knowledge Pad…</span></Bookmark>
      <Bookmark $w={138} $gap={3} $ls={0.15}><EP /><span>BioinfoMeetups</span></Bookmark>
      <Bookmark $w={192} $gap={3}><svg width="16" height="16"><path d="M2 4v9M5 4v9M8 7v6M11 6v7M14 7v6" stroke="#222" strokeWidth="2.200" /></svg><span>FINLEX ® - Ajantasain…</span></Bookmark>
      <Bookmark $w={303} $gap={3} $ls={0.3}><svg width="14" height="16"><circle cx="7" cy="10" r="4.800" fill="none" stroke="#0c5b93" strokeWidth="1.600" strokeDasharray="5 1.500" /><circle cx="7" cy="10" r="2.300" fill="#a20f13" /><path fill="#0c5b93" d="M7 0 5 5q2 2 4 0z" /></svg><span>Connecting…</span></Bookmark>
      <svg width="8" height="8"><path d="m.5 1 3 3-3 3M4.500 1l3 3-3 3" stroke="#111" fill="none" strokeWidth="1.300" /></svg>
    </Bookmarks>
  </>
);

const Site = () => (
  <Page>
    <SiteHeader>
      <div><Logo /><Tagline>Apps4Finland on avoimen datan innovaatiokilpailu. <Link>Osallistu »</Link></Tagline></div>
      <SearchBox><svg width="14" height="17"><circle cx="8" cy="6" r="4.500" fill="none" stroke="#999" strokeWidth="2" /><path d="M5 9.500 1.500 15" stroke="#999" strokeWidth="2.600" /></svg>Search</SearchBox>
    </SiteHeader>
    <Menu>{menu.map(([t, w]) => <MenuItem key={t} $w={w}>{t}</MenuItem>)}</Menu>
    <Article>
      <Crumbs><Link>Kilpailutyöt</Link> &gt; <Link>2013</Link> &gt; <Link>Sarjat</Link> &gt; <Link>Hahmota</Link> &gt; Alueellinen hyvinvointi</Crumbs>
      <Heading>Alueellinen hyvinvointi</Heading>
      <Meta>Sarjassa: Hahmota<br />Avainsanat: alueellinen hyvinvointi, avoin lähdekoodi, Sotkanet, vuorovaikutteinen visualisointi</Meta>
      <Quote>"Vuorovaikutteinen visualisointi Sotkanetin aineistoista mahdollistaa laajojen alueelliseen hyvinvointiin liittyvien<br />ilmiöiden tutkimisen havainnollisessa muodossa."</Quote>
      <Columns><Chart /><Copy>{copy.map(([line, ls]) => <CopyLine key={line} $ls={ls}>{line}</CopyLine>)}</Copy></Columns>
    </Article>
  </Page>
);

export default function App() {
  return (
    <Desktop>
      <Global />
      <Panel />
      <Body>
        <Dock />
        <Browser>
          <Chrome />
          <Viewport>
            <Canvas><Site /></Canvas>
            <Scrollbar>
              <ScrollButton><Tri dir="up" s={6} /></ScrollButton>
              <Thumb><svg width="5" height="8"><path d="M0 .5h4M0 3.500h4M0 6.500h4" stroke="#9c9893" /></svg></Thumb>
              <ScrollButton $down><Tri s={6} /></ScrollButton>
            </Scrollbar>
          </Viewport>
        </Browser>
      </Body>
    </Desktop>
  );
}
